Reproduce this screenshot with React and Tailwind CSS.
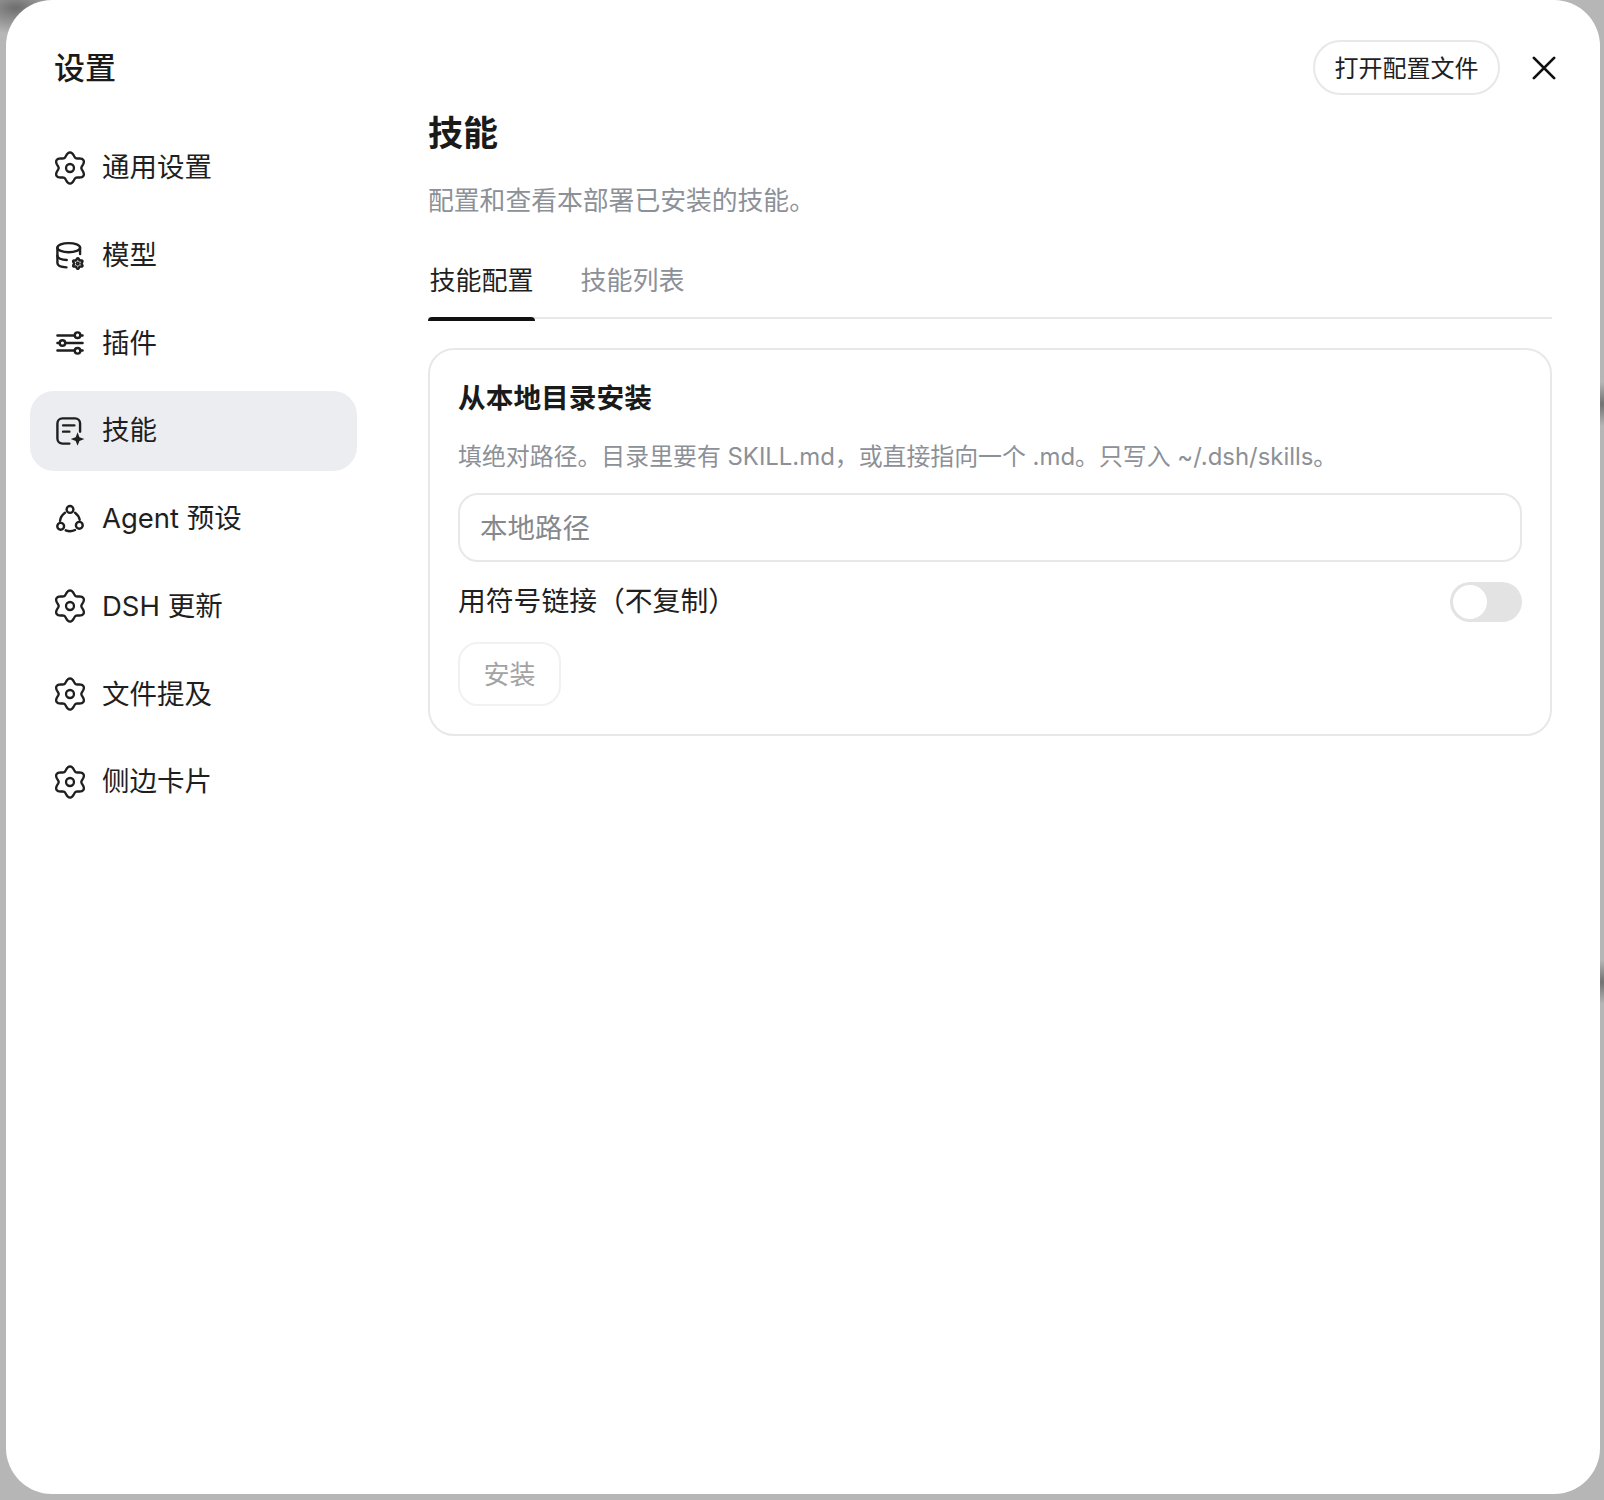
import { useState } from "react";

// six lobed outline used by the settings icons
function flowerPath(cx, cy, r, amp) {
  const pts = [];
  for (let i = 0; i < 96; i++) {
    const a = (i / 96) * Math.PI * 2;
    const rad = r + amp * Math.cos(6 * a);
    pts.push(`${(cx + rad * Math.cos(a - Math.PI / 2)).toFixed(2)} ${(cy + rad * Math.sin(a - Math.PI / 2)).toFixed(2)}`);
  }
  return "M" + pts.join("L") + "Z";
}

const iconClass = "w-[34px] h-[34px] shrink-0";

function GearIcon() {
  return (
    <svg viewBox="0 0 24 24" fill="none" stroke="currentColor" strokeWidth="1.65" strokeLinejoin="round" className={iconClass}>
      <path d={flowerPath(12, 12, 9.5, 1.5)} />
      <circle cx="12" cy="12" r="2.8" />
    </svg>
  );
}

function ModelIcon() {
  return (
    <svg viewBox="-1.5 -1.5 27 27" fill="none" stroke="currentColor" strokeWidth="1.9" strokeLinecap="round" strokeLinejoin="round" className={iconClass}>
      <ellipse cx="11" cy="5.4" rx="9" ry="3.6" />
      <path d="M2 5.4v12.2c0 2 3 3.3 7.2 3.4" />
      <path d="M20 5.4v5" />
      <path d="M2 11.8c0 1.9 3.2 3.3 7.4 3.4" />
      <path d={flowerPath(18.2, 18, 3.5, 0.7)} />
      <circle cx="18.2" cy="18" r="0.7" />
    </svg>
  );
}

function SlidersIcon() {
  return (
    <svg viewBox="-1.5 -1.5 27 27" fill="none" stroke="currentColor" strokeWidth="1.9" strokeLinecap="round" className={iconClass}>
      <path d="M2 6h13.8M20.2 6H22" />
      <circle cx="18" cy="5.8" r="2.2" />
      <path d="M2 12h1.8M8.2 12H22" />
      <circle cx="6" cy="12" r="2.2" />
      <path d="M2 18h13.8M20.2 18H22" />
      <circle cx="18" cy="18.2" r="2.2" />
    </svg>
  );
}

function SkillIcon() {
  return (
    <svg viewBox="-1.5 -1.5 27 27" fill="none" stroke="currentColor" strokeWidth="1.9" strokeLinecap="round" strokeLinejoin="round" className={iconClass}>
      <path d="M11.5 22H6a4 4 0 0 1-4-4V6a4 4 0 0 1 4-4h10a4 4 0 0 1 4 4v6.5" />
      <path d="M6.5 7.5h9M6.5 12.5h5" />
      <path fill="currentColor" stroke="none" d="M18 13l1.5 3.9 3.9 1.5-3.9 1.5-1.5 3.9-1.5-3.9-3.9-1.5 3.9-1.5z" />
    </svg>
  );
}

function AgentIcon() {
  return (
    <svg viewBox="-1.5 -1.5 27 27" fill="none" stroke="currentColor" strokeWidth="1.9" strokeLinecap="round" className={iconClass}>
      <circle cx="12" cy="4.4" r="2.7" />
      <circle cx="4.6" cy="17.8" r="2.7" />
      <circle cx="19.4" cy="17" r="2.7" />
      <path d="M8 7C5.9 8.6 4.4 10.8 4.1 13.4" />
      <path d="M16 7c1.9 1.4 3.2 3.2 3.7 5.6" />
      <path d="M8.6 21c2.5 1 5 .9 7.4-.3" />
    </svg>
  );
}

const navItems = [
  { label: "通用设置", icon: GearIcon },
  { label: "模型", icon: ModelIcon },
  { label: "插件", icon: SlidersIcon },
  { label: "技能", icon: SkillIcon, active: true },
  { label: "Agent 预设", icon: AgentIcon },
  { label: "DSH 更新", icon: GearIcon },
  { label: "文件提及", icon: GearIcon },
  { label: "侧边卡片", icon: GearIcon },
];

function Sidebar() {
  return (
    <aside className="w-[350px] shrink-0 pl-6">
      <h2 className="h-[128px] pt-[48px] pl-[24px] text-[31px] leading-10 font-medium text-[#1a1a1a]">设置</h2>
      <nav className="flex flex-col gap-[7.7px]">
        {navItems.map((item) => {
          const Icon = item.icon;
          return (
            <button
              key={item.label}
              className={`w-[327px] h-20 flex items-center gap-[15px] pl-[23px] rounded-[24px] text-left text-[27.5px] text-[#1f1f1f] ${
                item.active ? "bg-[#ecedf1]" : ""
              }`}
            >
              <Icon />
              <span>{item.label}</span>
            </button>
          );
        })}
      </nav>
    </aside>
  );
}

function SkillsCard() {
  const [symlink, setSymlink] = useState(false);
  return (
    <section className="mt-[29px] h-[388px] rounded-[26px] border-2 border-[#e8e8e8] px-7 pt-[30px]">
      <h3 className="text-[27.7px] leading-9 font-semibold text-[#1a1a1a]">从本地目录安装</h3>
      <p className="mt-[25px] text-[23.9px] leading-8 text-[#8c9097]">
        填绝对路径。目录里要有 SKILL.md，或直接指向一个 .md。只写入 ~/.dsh/skills。
      </p>
      <input
        placeholder="本地路径"
        className="mt-[20px] block w-full h-[69px] rounded-[20px] border-2 border-[#e8e8e8] px-5 text-[27.5px] outline-none placeholder:text-[#85888c]"
      />
      <div className="mt-[20px] h-10 flex items-center justify-between">
        <span className="text-[27.8px] text-[#1f1f1f]">用符号链接（不复制）</span>
        <button
          onClick={() => setSymlink(!symlink)}
          className="w-[72px] h-10 rounded-full bg-[#e3e3e3] p-[3px] flex items-center"
        >
          <span className="w-[34px] h-[34px] rounded-full bg-white" />
        </button>
      </div>
      <button className="mt-[20px] w-[103px] h-[64px] rounded-[20px] border-2 border-[#f1f1f1] text-[26px] text-[#a3a3a3]">
        安装
      </button>
    </section>
  );
}

export default function App() {
  const [tab, setTab] = useState("config");
  return (
    <div className="w-[1604px] h-[1500px] bg-[#b6b6b6] bg-[radial-gradient(ellipse_50px_26px_at_16px_8px,#6e6e6e,transparent),radial-gradient(ellipse_14px_22px_at_1602px_404px,#707070,transparent),radial-gradient(ellipse_14px_22px_at_1602px_982px,#707070,transparent)] pl-[6px] overflow-hidden font-[Inter,'Noto_Sans_CJK_SC',sans-serif]">
      <div className="w-[1594px] h-[1494px] bg-white rounded-[46px] flex">
        <Sidebar />
        <main className="flex-1 pl-[72px] pr-[48px] pt-[40px]">
          <div className="h-[55px] flex items-center justify-end gap-7 -mr-2">
            <button className="w-[187px] h-[55px] rounded-full border-2 border-[#e8e8e8] pt-[2px] text-[24px] text-[#1f1f1f]">
              打开配置文件
            </button>
            <button className="w-8 h-8 flex items-center justify-center text-[#111]">
              <svg viewBox="0 0 24 24" fill="none" stroke="currentColor" strokeWidth="2.1" strokeLinecap="round" className="w-8 h-8">
                <path d="M4.4 4.4l15.2 15.2M19.6 4.4L4.4 19.6" />
              </svg>
            </button>
          </div>
          <h1 className="mt-[15px] text-[35px] leading-[46px] font-semibold text-[#1a1a1a]">技能</h1>
          <p className="mt-[28px] text-[25.8px] leading-[34px] text-[#8c9097]">配置和查看本部署已安装的技能。</p>
          <div className="mt-[36px] h-[65px] border-b-2 border-[#e8e8e8] flex gap-[44px] text-[26px]">
            <button
              onClick={() => setTab("config")}
              className="relative h-[65px] w-[107px] pb-[12px] text-[#1f1f1f]"
            >
              技能配置
              {tab === "config" && <span className="absolute left-0 right-0 bottom-[-2px] h-[4px] rounded-t bg-[#111]" />}
            </button>
            <button onClick={() => setTab("list")} className="h-[65px] w-[107px] pb-[12px] text-[#8c9097]">
              技能列表
            </button>
          </div>
          <SkillsCard />
        </main>
      </div>
    </div>
  );
}
